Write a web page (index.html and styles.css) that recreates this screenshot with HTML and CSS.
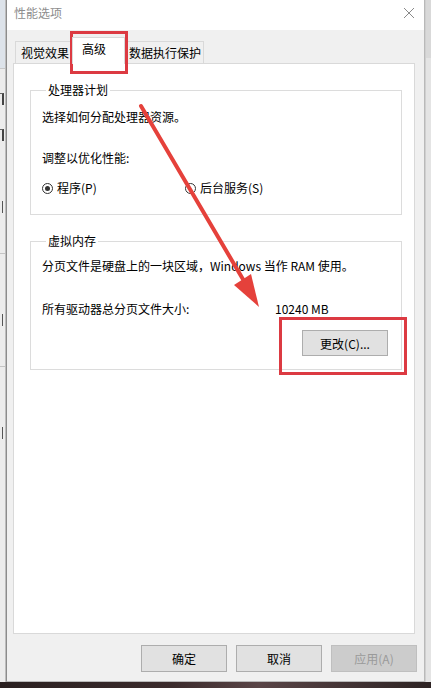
FILE: index.html
```html
<!DOCTYPE html>
<html lang="zh-CN">
<head>
<meta charset="utf-8">
<title>性能选项</title>
<link rel="stylesheet" href="styles.css">
</head>
<body>
<div class="screen">
  <div class="side side-left">
    <div class="side-top"></div>
    <div class="side-mark"></div>
    <div class="side-mark"></div>
    <div class="side-mark side-mark-thin"></div>
    <div class="side-sep"></div>
    <div class="side-mark side-mark-thin"></div>
    <div class="side-sep"></div>
    <div class="side-mark side-mark-thin"></div>
  </div>
  <div class="dialog">
    <div class="titlebar">
      <span class="title">性能选项</span>
      <svg class="close" width="12" height="12" viewBox="0 0 12 12"><path d="M1 1L11 11M11 1L1 11" stroke="#8a8a8a" stroke-width="1" fill="none"/></svg>
    </div>
    <div class="tabs">
      <div class="tab">视觉效果</div>
      <div class="tab tab-active">高级</div>
      <div class="tab tab-last">数据执行保护</div>
    </div>
    <div class="panel">
      <fieldset class="group group-cpu">
        <legend>处理器计划</legend>
        <p class="line">选择如何分配处理器资源。</p>
        <p class="line line-gap">调整以优化性能:</p>
        <div class="radios">
          <label class="radio radio-first"><span class="dot dot-on"></span>程序(P)</label>
          <label class="radio"><span class="dot"></span>后台服务(S)</label>
        </div>
      </fieldset>
      <fieldset class="group group-vm">
        <legend>虚拟内存</legend>
        <p class="line">分页文件是硬盘上的一块区域，Windows 当作 RAM 使用。</p>
        <div class="size-row">
          <span class="size-label">所有驱动器总分页文件大小:</span>
          <span>10240 MB</span>
        </div>
        <div class="change-row">
          <button class="btn btn-change">更改(C)...</button>
        </div>
      </fieldset>
    </div>
    <div class="footer">
      <button class="btn btn-foot">确定</button>
      <button class="btn btn-foot">取消</button>
      <button class="btn btn-foot btn-disabled">应用(A)</button>
    </div>
  </div>
  <div class="side side-right">
    <div class="side-right-top"></div>
  </div>
  <div class="bottom-strip"></div>
</div>
<svg class="annot" width="431" height="688" viewBox="0 0 431 688">
  <rect x="71.5" y="32.5" width="55" height="40" fill="none" stroke="#dc3a42" stroke-width="3"/>
  <rect x="280.5" y="318.5" width="125" height="55" fill="none" stroke="#dc3a42" stroke-width="3"/>
  <line x1="141" y1="106" x2="244" y2="281" stroke="#e5413b" stroke-width="4" stroke-linecap="round"/>
  <polygon points="259,307 251,274 234,285" fill="#e5413b"/>
</svg>
</body>
</html>
```
FILE: styles.css
```css
html, body {
  margin: 0;
  padding: 0;
}
body {
  width: 431px;
  height: 688px;
  overflow: hidden;
  position: relative;
  font-family: "Noto Sans CJK SC", "Microsoft YaHei", sans-serif;
  font-size: 12px;
  color: #000;
  background: #2a2222;
}
.screen {
  display: grid;
  grid-template-columns: 6px 419px 6px;
  grid-template-rows: 682px 6px;
}
.side {
  background: #ececec;
  overflow: hidden;
}
.side-left {
  display: flex;
  flex-direction: column;
  border-right: 1px solid #bdbdbd;
}
.side-top {
  height: 68px;
  background: #dde3ea;
  border-bottom: 1px solid #c8c8c8;
}
.side-mark {
  width: 4px;
  height: 12px;
  margin-top: 24px;
  border-right: 2px solid #444;
  border-top: 1px solid #666;
  box-sizing: border-box;
}
.side-mark-thin {
  width: 3px;
  border-top: none;
  border-right: 1px solid #555;
  margin-top: 60px;
}
.side-sep {
  height: 1px;
  margin-top: 40px;
  background: #c4c4c4;
}
.side-right {
  background: #e4e4e4;
  border-left: 1px solid #cfcfcf;
}
.side-right-top {
  height: 58px;
  background: #d9d9d9;
}
.bottom-strip {
  grid-column: 1 / 4;
  background: linear-gradient(90deg, #2a2020 0%, #3b2b2c 40%, #5a4547 60%, #2d2323 100%);
}
.dialog {
  display: flex;
  flex-direction: column;
  background: #f0f0f0;
  border-left: 1px solid #8c8c8c;
  border-right: 1px solid #b9b9b9;
  border-bottom: 1px solid #b9b9b9;
}
.titlebar {
  height: 30px;
  background: #fff;
  display: flex;
  align-items: center;
  justify-content: space-between;
  padding: 0 9px 0 7px;
}
.title {
  color: #8c8c8c;
  font-size: 12px;
  line-height: 16px;
  margin-top: -4px;
}
.close {
  margin-top: -4px;
}
.tabs {
  display: flex;
  align-items: flex-end;
  margin: 6px 0 0 8px;
  height: 27px;
}
.tab {
  height: 22px;
  box-sizing: border-box;
  border: 1px solid #d9d9d9;
  border-bottom: none;
  background: #f0f0f0;
  padding: 0 3px 0 5px;
  line-height: 21px;
  white-space: nowrap;
}
.tab-active {
  height: 27px;
  background: #fff;
  margin: 0 -1px -1px;
  padding: 0 18px 0 9px;
  line-height: 22px;
  position: relative;
  z-index: 1;
}
.tab-last {
  padding: 0 2px 0 4px;
}
.panel {
  height: 571px;
  box-sizing: border-box;
  margin: 0 9px 0 6px;
  background: #fff;
  border: 1px solid #d9d9d9;
  padding: 18px 12px 0 16px;
}
.group {
  margin: 0;
  border: 1px solid #dcdcdc;
  padding: 0 12px 0 11px;
  min-width: 0;
}
.group legend {
  padding: 0 2px;
  margin-left: 4px;
  line-height: 16px;
}
.group-cpu {
  padding-top: 11px;
  padding-bottom: 18px;
}
.group-vm {
  margin-top: 18px;
  padding-top: 9px;
  padding-bottom: 13px;
}
.line {
  margin: 0;
  line-height: 16px;
}
.line-gap {
  margin-top: 25px;
}
.radios {
  display: flex;
  margin-top: 14px;
  line-height: 16px;
}
.radio {
  display: flex;
  align-items: center;
  gap: 4px;
}
.radio-first {
  width: 143px;
}
.dot {
  width: 11px;
  height: 11px;
  box-sizing: border-box;
  border: 1px solid #333;
  border-radius: 50%;
  display: inline-flex;
  align-items: center;
  justify-content: center;
}
.dot-on::after {
  content: "";
  width: 5px;
  height: 5px;
  border-radius: 50%;
  background: #333;
}
.size-row {
  display: flex;
  margin-top: 27px;
  line-height: 16px;
}
.size-label {
  width: 233px;
}
.change-row {
  display: flex;
  justify-content: flex-end;
  margin-top: 13px;
  padding-right: 1px;
}
.btn {
  font-family: inherit;
  font-size: 12px;
  color: #000;
  background: #e1e1e1;
  border: 1px solid #adadad;
  border-radius: 0;
  padding: 0;
  margin: 0;
}
.btn-change {
  width: 86px;
  height: 26px;
}
.footer {
  display: flex;
  justify-content: flex-end;
  gap: 9px;
  padding: 11px 7px 0 0;
}
.btn-foot {
  width: 86px;
  height: 27px;
}
.btn-disabled {
  background: #cccccc;
  border-color: #bfbfbf;
  color: #9a9a9a;
}
.annot {
  position: absolute;
  left: 0;
  top: 0;
  pointer-events: none;
}
```
